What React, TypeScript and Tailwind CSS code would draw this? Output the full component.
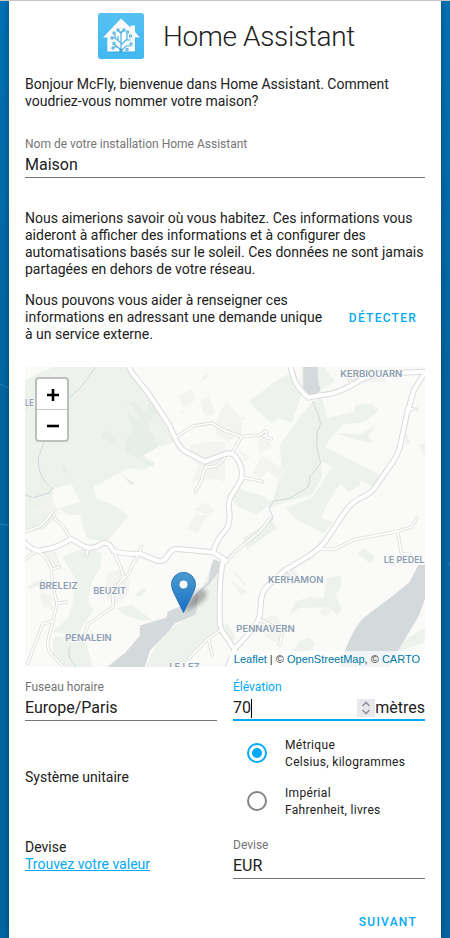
import React from "react";

const minorRoads = [
  "M455 215 L505 183 L560 174 L600 197 L650 215 L705 210 L722 198 Q732 210 715 213 L740 222",
  "M650 215 L620 265",
  "M600 278 L575 303 L540 308 L530 345 L511 380",
  "M650 338 L685 343 L712 350",
  "M971 38 L979 54",
  "M1153 134 L1165 131 M1176 133 L1176 132",
  "M0 128 L22 112",
  "M0 500 L45 484 L68 460 L85 438",
  "M88 460 L113 482 L138 522",
  "M0 583 L35 557 L60 572 L78 607 L83 660 L96 715 L84 768 L69 825 Q63 858 92 880 L120 912",
  "M83 612 L104 605",
  "M96 716 L123 711",
  "M83 768 L53 777 L8 895",
  "M190 550 L185 571",
  "M268 562 L288 610 L296 640 L313 625 L320 602 L345 562 L350 545",
  "M296 640 L261 678 L265 725 L190 777 L180 802",
  "M590 793 L550 820 L491 881",
  "M550 820 L562 870",
  "M600 596 L630 560 L705 500 L735 460",
  "M880 551 L927 553 L990 523 L1115 500 L1160 486 L1175 460",
  "M1118 500 L1129 565 L1155 568",
  "M790 620 L812 638",
  "M705 765 L748 785 L772 800 L764 840",
];
const majorRoads = [
  "M308 0 L322 25 L370 85 L430 175 L455 228 Q465 250 480 259 L540 290 L600 267 Q628 259 638 285 Q655 310 649 343 L615 400 Q609 412 614 450 Q614 485 598 500 Q574 525 565 560",
  "M0 534 Q25 560 45 556 Q90 552 138 522 L180 546 Q204 553 222 541 Q247 520 265 558 Q295 568 345 566 L395 587 Q417 592 426 574 L437 560 Q445 550 465 553 L565 562 L600 585",
  "M595 580 Q585 632 584 690 L584 765 Q584 795 607 821 L632 860",
  "M795 0 L807 43 Q820 71 850 98 L890 90 Q940 88 1010 43 Q1055 20 1130 23 L1200 20",
  "M1200 22 L1167 75 L1146 145 L1128 230 Q1122 270 1090 310 L1048 370 Q1038 385 1005 400 Q975 415 950 455 L900 530 Q885 549 850 574 L780 616 L725 665 Q710 682 708 710 L705 750 Q695 785 630 850 L607 912",
];

const MapCanvas = () => (
  <svg viewBox="0 6 1200 900" className="block h-[300px] w-[400px]">
    <rect y="0" width="1200" height="910" fill="#fafaf8" />
    <g fill="#edf2ed">
      <path d="M85 6 L300 6 L368 90 L450 232 L400 245 L342 265 L390 295 L358 315 L310 310 L235 350 L205 365 L215 400 L270 422 L310 455 L270 500 L245 530 L185 520 L165 450 L130 450 L100 430 L165 412 L140 357 L85 372 L80 410 L95 450 L0 495 L0 45Z" />
      <path d="M0 490 L45 450 L100 450 L60 490 L0 505Z" />
      <path d="M112 575 L180 548 L230 565 L225 610 L200 650 L190 710 L205 735 L170 790 L160 810 L82 800 L130 760 L145 705 L150 640Z" />
      <path d="M85 815 L180 820 L205 912 L115 912 L82 860Z" />
      <path d="M10 662 L55 640 L60 655 L12 672Z M272 730 L320 720 L385 767 L345 765 L300 750Z M330 690 L350 670 L365 673 L345 697Z" />
      <path d="M575 575 L585 730 L592 790 L490 880 L475 912 L360 912 L390 845 L430 800 L480 760 L510 745 L515 700Z" />
      <path d="M670 110 L750 50 L810 15 L830 90 L800 175 L760 160 L740 175Z" />
      <path d="M830 6 L900 6 L930 50 L870 85 L830 75Z" />
      <path d="M855 115 L890 95 L905 160 L990 140 L990 120 L1040 116 L1060 135 L1020 170 L950 180 L920 215 L900 245 L1065 330 L1045 365 L890 290 L890 340 L860 390 L780 410 L735 430 L705 405 L745 405 L770 310 L765 240Z" />
      <path d="M930 205 L1005 208 L1050 184 L1030 215 L1045 235 L1000 225Z" />
      <path d="M920 308 L970 320 L1010 330 L1005 362 L970 380 L945 355 L900 430 L880 490 L825 470 L780 430 L860 400Z" />
      <path d="M635 370 L720 395 L730 420 L695 450 L650 430 L625 410Z M860 450 L925 470 L895 505 L850 480Z" />
      <path d="M655 518 L740 465 L755 490 L700 530 L665 555Z M995 565 L1015 550 L1050 575 L1035 595Z M1080 568 L1110 580 L1110 600 L1095 600Z" />
      <path d="M905 640 L950 630 L945 675 L930 685 L950 735 L935 750 L910 725 L820 730 L795 750 L810 710 L855 695 L895 700Z" />
      <path d="M830 825 L855 817 L870 840 L850 860 L800 860Z M1095 850 L1200 790 L1200 830 L1110 865Z M1180 240 L1200 232 L1200 275Z M1145 205 L1155 235 L1140 235Z" />
      <path d="M600 770 L630 810 L620 855 L600 830Z M523 50 L545 27 L552 35Z" />
    </g>
    <path d="M296 102 Q355 120 368 155 L370 190 L400 245 L342 278 L300 262 L302 225 L325 205 L307 140 L345 170 Q335 125 296 102Z M372 90 L395 140 L372 175 L365 145Z M228 212 L244 195 L278 222 L262 240Z M110 290 L132 325 L118 322Z M293 332 L330 355 L318 360Z M335 280 L390 295 L380 304Z" fill="#e7ede7" />
    <g fill="#f3f3f1">
      <path d="M457 94 L500 74 L515 102 L478 127Z M524 108 L550 94 L572 145 L540 155Z M570 185 L590 130 L605 112 L650 160 L650 205 L610 230 L575 210Z M495 240 L545 230 L600 230 L600 350 L560 340 L500 350 L520 300 L490 270Z" />
      <path d="M640 255 L675 275 L660 290Z M695 210 L725 215 L740 245 L705 265Z M685 325 L710 270 L740 290 L785 315 L760 342 L725 320 L705 340Z M485 495 L510 450 L550 450 L530 480 L520 505Z M508 435 L540 412 L570 435 L550 450Z" />
      <path d="M245 625 L295 610 L315 650 L310 690 L275 720 L245 700Z M50 555 L85 540 L105 595 L80 620Z M45 680 L80 690 L85 740 L50 720Z M20 445 L80 400 L105 445Z M610 640 L670 680 L650 690Z M605 600 L665 655 L660 665Z M705 760 L755 750 L780 800 L765 840 L720 815Z M765 610 L805 600 L830 650 L795 660Z M960 30 L1090 20 L1080 50 L970 55Z" />
      <path d="M883 740 L900 722 L922 735 L902 758Z M645 160 L662 155 L660 165Z M465 143 L475 137 L478 148Z" />
    </g>
    <g fill="#d4dadc">
      <path d="M835 6 L878 6 L880 50 L887 78 L850 95 L835 80Z" />
      <path d="M565 583 L590 592 L578 625 L550 660 L520 685 L512 748 L450 775 L420 810 L375 855 L357 912 L240 912 L300 865 L345 812 L345 782 L425 758 L428 740 L475 720 L510 690 L550 650 L555 615Z" />
      <path d="M1200 600 L1180 600 L1153 652 L1115 683 L1020 755 Q985 785 955 870 L940 912 L1090 912 L1120 855 L1180 755 L1200 700Z" />
    </g>
    <g fill="none" stroke="#dfc9c9" strokeWidth="1.5" strokeDasharray="5 4">
      <path d="M590 592 L578 625 L550 660 L518 690 L512 748 L450 775 L420 810 L375 855 L357 905 M425 758 L345 782 L345 812 L300 865 L245 905" />
      <path d="M1200 700 L1180 755 L1120 835 L1080 880" />
    </g>
    <g fill="none" stroke="#d1d8de" strokeWidth="3">
      <path d="M213 6 L165 70 L128 102 M57 230 L40 280 Q38 320 60 350 L80 370 L75 383 L25 398 L0 390" />
      <path d="M862 108 L880 150 L887 178 L877 200 L875 245 L887 295 L855 335 L850 365 L795 400 L745 408 L732 430 L745 460 L700 500 L625 560 L600 585" />
      <path d="M135 845 Q125 875 145 895 L160 912" />
    </g>
    <g fill="none" strokeLinecap="round" strokeLinejoin="round">
      {minorRoads.map((d) => <path key={d} d={d} stroke="#dededc" strokeWidth="10" />)}
      {majorRoads.map((d) => <path key={d} d={d} stroke="#dadad9" strokeWidth="18" />)}
      {minorRoads.map((d) => <path key={d + "i"} d={d} stroke="#ffffff" strokeWidth="5" />)}
      {majorRoads.map((d) => <path key={d + "i"} d={d} stroke="#ffffff" strokeWidth="12" />)}
    </g>
    <g fill="#8d9db1" stroke="#fafaf8" strokeWidth="4" paintOrder="stroke" fontFamily="Inter, sans-serif" fontSize="26" fontWeight="600">
      <text x="946" y="36" textLength="186" lengthAdjust="spacingAndGlyphs">KERBIOUARN</text>
      <text x="0" y="122" textLength="26" lengthAdjust="spacingAndGlyphs">LE</text>
      <text x="43" y="672" textLength="115" lengthAdjust="spacingAndGlyphs">BRELEIZ</text>
      <text x="205" y="688" textLength="98" lengthAdjust="spacingAndGlyphs">BEUZIT</text>
      <text x="121" y="829" textLength="139" lengthAdjust="spacingAndGlyphs">PENALEIN</text>
      <text x="433" y="914" textLength="91" lengthAdjust="spacingAndGlyphs">LE LEZ</text>
      <text x="729" y="653" textLength="166" lengthAdjust="spacingAndGlyphs">KERHAMON</text>
      <text x="634" y="801" textLength="175" lengthAdjust="spacingAndGlyphs">PENNAVERN</text>
      <text x="1076" y="593" textLength="123" lengthAdjust="spacingAndGlyphs">LE PEDEL</text>
    </g>
  </svg>
);

const Marker = () => (
  <svg className="absolute left-[145px] top-[204px]" width="46" height="44" viewBox="0 0 46 44">
    <defs>
      <linearGradient id="pin" x1="0" y1="0" x2="0" y2="1">
        <stop offset="0" stopColor="#4b9bd1" />
        <stop offset="1" stopColor="#1870c4" />
      </linearGradient>
      <filter id="soft" x="-30%" y="-30%" width="160%" height="160%">
        <feGaussianBlur stdDeviation="2" />
      </filter>
    </defs>
    <path d="M14 41 L23 24 Q31 16 36 20 Q39 27 29 33Z" fill="#000000" opacity="0.28" filter="url(#soft)" />
    <path d="M13.5 41.5 L4.2 22.5 Q1.5 17.5 1.5 13.4 A12 12 0 0 1 25.5 13.4 Q25.5 17.5 22.8 22.5Z" fill="url(#pin)" stroke="#2d75ae" />
    <circle cx="13.5" cy="13.5" r="4.5" fill="#ffffff" stroke="#3477ac" strokeWidth="0.8" />
  </svg>
);

const Logo = () => (
  <svg className="h-[46px] w-[46px]" viewBox="0 0 46 46">
    <defs>
      <linearGradient id="logo" x1="0" y1="0" x2="0" y2="1">
        <stop offset="0" stopColor="#55c1f3" />
        <stop offset="1" stopColor="#41b8f1" />
      </linearGradient>
    </defs>
    <rect width="46" height="46" rx="2.5" fill="url(#logo)" />
    <path d="M10 39.5 V24.5 H5.5 L22.5 6.5 L32 15 V13 H37 V20 L42 25 H37.5 V39.5Z" fill="#289fd6" opacity="0.6" />
    <path d="M9.3 38.5 V24.5 H5 L23 5.5 L32.5 14.5 V12.5 H37 V19 L42 24.5 H37 V38.5Z" fill="#fafafa" />
    <g fill="none" stroke="#4fb3e3" strokeWidth="1.2">
      <path d="M23 38 V18 M23 30 L17 25 V21 M18 25 H14.5 M23 32 L29 26 V20 M28 27 H32.5 M23 37 L16 31 M19 34 H15 M23 38 L28 33 H33 M20 27 V23 M23 21 L20 17 M23 20 L26 17" />
      <circle cx="16" cy="20" r="1.1" /><circle cx="14" cy="25" r="1.1" /><circle cx="20" cy="17" r="1.1" />
      <circle cx="26" cy="17" r="1.1" /><circle cx="29.5" cy="19" r="1.1" /><circle cx="32.5" cy="23" r="1.1" />
      <circle cx="33" cy="31" r="1.1" /><circle cx="16" cy="30.5" r="1.1" /><circle cx="15" cy="35" r="1.1" /><circle cx="29" cy="36.5" r="1.1" />
    </g>
    <circle cx="23" cy="37.5" r="1.7" fill="#41a9dc" />
  </svg>
);

const Field = ({ label, value }: { label: string; value: string }) => (
  <div className="flex h-[42px] flex-col border-b border-[#757575]">
    <span className="h-[17px] whitespace-nowrap text-[12px] leading-4 text-[#757575]">{label}</span>
    <span className="text-[16px] leading-6">{value}</span>
  </div>
);

const Choice = ({ checked, title, detail }: { checked?: boolean; title: string; detail: string }) => (
  <div className="flex h-12 items-center">
    <svg className="ml-[14px] mr-[18px] h-5 w-5" viewBox="0 0 20 20">
      <circle cx="10" cy="10" r="9" fill="none" strokeWidth="2" stroke={checked ? "#03a9f4" : "#858585"} />
      {checked && <circle cx="10" cy="10" r="5" fill="#03a9f4" />}
    </svg>
    <span className="pt-[2px] text-[12px] leading-[17px] tracking-[0.32px]">{title}<br />{detail}</span>
  </div>
);

const Sides = () => (
  <svg className="absolute inset-0 h-full w-full" viewBox="0 0 450 938">
    <g fill="none" stroke="#3f93c5" opacity="0.6">
      <path d="M0 383.5 L9 387.5 M0 523.5 L9 525" />
      <circle cx="451" cy="564" r="2" />
    </g>
  </svg>
);

export default function App() {
  return (
    <div className="relative h-[938px] w-[450px] overflow-hidden border-t border-[#c9c5be] bg-linear-to-b from-[#0072b5] via-[#0067a2] via-40% to-[#0067a2] font-[Roboto,sans-serif] text-[#212121]">
      <Sides />
      <main className="relative mx-[9px] flex h-[938px] flex-col bg-white px-4 shadow-[0_0_8px_rgba(0,0,0,0.35)]">
        <header className="mt-3 flex h-[46px] items-center justify-center gap-[19px] pl-[3px]">
          <Logo />
          <h1 className="pt-[2px] text-[28px] font-light leading-[46px] tracking-[-0.33px]">Home Assistant</h1>
        </header>
        <p className="mt-[17px] whitespace-nowrap text-[14px] leading-[17px]">
          Bonjour McFly, bienvenue dans Home Assistant. Comment<br />voudriez-vous nommer votre maison?
        </p>
        <div className="mt-[26px]"><Field label="Nom de votre installation Home Assistant" value="Maison" /></div>
        <p className="mt-8 whitespace-nowrap text-[14px] leading-[17px]">
          Nous aimerions savoir où vous habitez. Ces informations vous<br />
          aideront à afficher des informations et à configurer des<br />
          automatisations basés sur le soleil. Ces données ne sont jamais<br />
          partagées en dehors de votre réseau.
        </p>
        <div className="mt-[14px] flex items-center justify-between">
          <p className="whitespace-nowrap text-[14px] leading-[17px]">
            Nous pouvons vous aider à renseigner ces<br />
            informations en adressant une demande unique<br />
            à un service externe.
          </p>
          <button className="mr-2 text-[12px] font-medium leading-9 tracking-[1.25px] text-[#03a9f4]">DÉTECTER</button>
        </div>
        <section className="relative mt-6 h-[300px] w-[400px] shrink-0 overflow-hidden">
          <MapCanvas />
          <Marker />
          <div className="absolute left-[10px] top-[10px] flex h-[65px] w-[34px] flex-col rounded-[4px] border-2 border-[#bdbfbd] bg-white">
            <span className="flex h-[31px] items-center justify-center border-b border-[#cccccc] pl-px pt-[2px]">
              <svg width="14" height="14" viewBox="0 0 14 14"><path d="M1 7H13M7 1V13" stroke="#000000" strokeWidth="2.6" /></svg>
            </span>
            <span className="flex h-[30px] items-center justify-center pl-px pt-[2px]">
              <svg width="14" height="14" viewBox="0 0 14 14"><path d="M1 7H13" stroke="#000000" strokeWidth="2.6" /></svg>
            </span>
          </div>
          <div className="absolute bottom-0 right-0 h-4 whitespace-nowrap bg-white/70 px-[5px] font-['Liberation_Sans',Arial,sans-serif] text-[11px] leading-4 text-[#333333]">
            <span className="text-[#0078a8]">Leaflet</span> | © <span className="text-[#0078a8]">OpenStreetMap</span>, © <span className="text-[#0078a8]">CARTO</span>
          </div>
        </section>
        <div className="mt-3 grid grid-cols-2 gap-4">
          <Field label="Fuseau horaire" value="Europe/Paris" />
          <div className="flex h-[42px] flex-col border-b-2 border-[#03a9f4]">
            <span className="h-[18px] text-[12px] leading-4 text-[#03a9f4]">Élévation</span>
            <div className="flex h-[22px] items-center text-[16px] leading-6">
              <span>70</span>
              <span className="h-[19px] w-px bg-black" />
              <span className="ml-auto flex h-[18px] w-[18px] items-center justify-center bg-[#e9e9ed]">
                <svg width="10" height="14" viewBox="0 0 10 14" fill="none" stroke="#92929b" strokeWidth="1.6"><path d="M1.5 5L5 1.5L8.5 5M1.5 9L5 12.5L8.5 9" /></svg>
              </span>
              <span>mètres</span>
            </div>
          </div>
        </div>
        <div className="mt-2 flex h-24 items-center">
          <span className="w-52 text-[14px] leading-[17px]">Système unitaire</span>
          <div>
            <Choice checked title="Métrique" detail="Celsius, kilogrammes" />
            <Choice title="Impérial" detail="Fahrenheit, livres" />
          </div>
        </div>
        <div className="mt-3 grid grid-cols-2 gap-4">
          <div className="pt-[2px] text-[14px] leading-[17px]">
            Devise<br /><a className="text-[#03a9f4] underline">Trouvez votre valeur</a>
          </div>
          <Field label="Devise" value="EUR" />
        </div>
        <button className="mr-2 mt-[25px] self-end text-[12px] font-medium leading-9 tracking-[1.25px] text-[#03a9f4]">SUIVANT</button>
      </main>
    </div>
  );
}
